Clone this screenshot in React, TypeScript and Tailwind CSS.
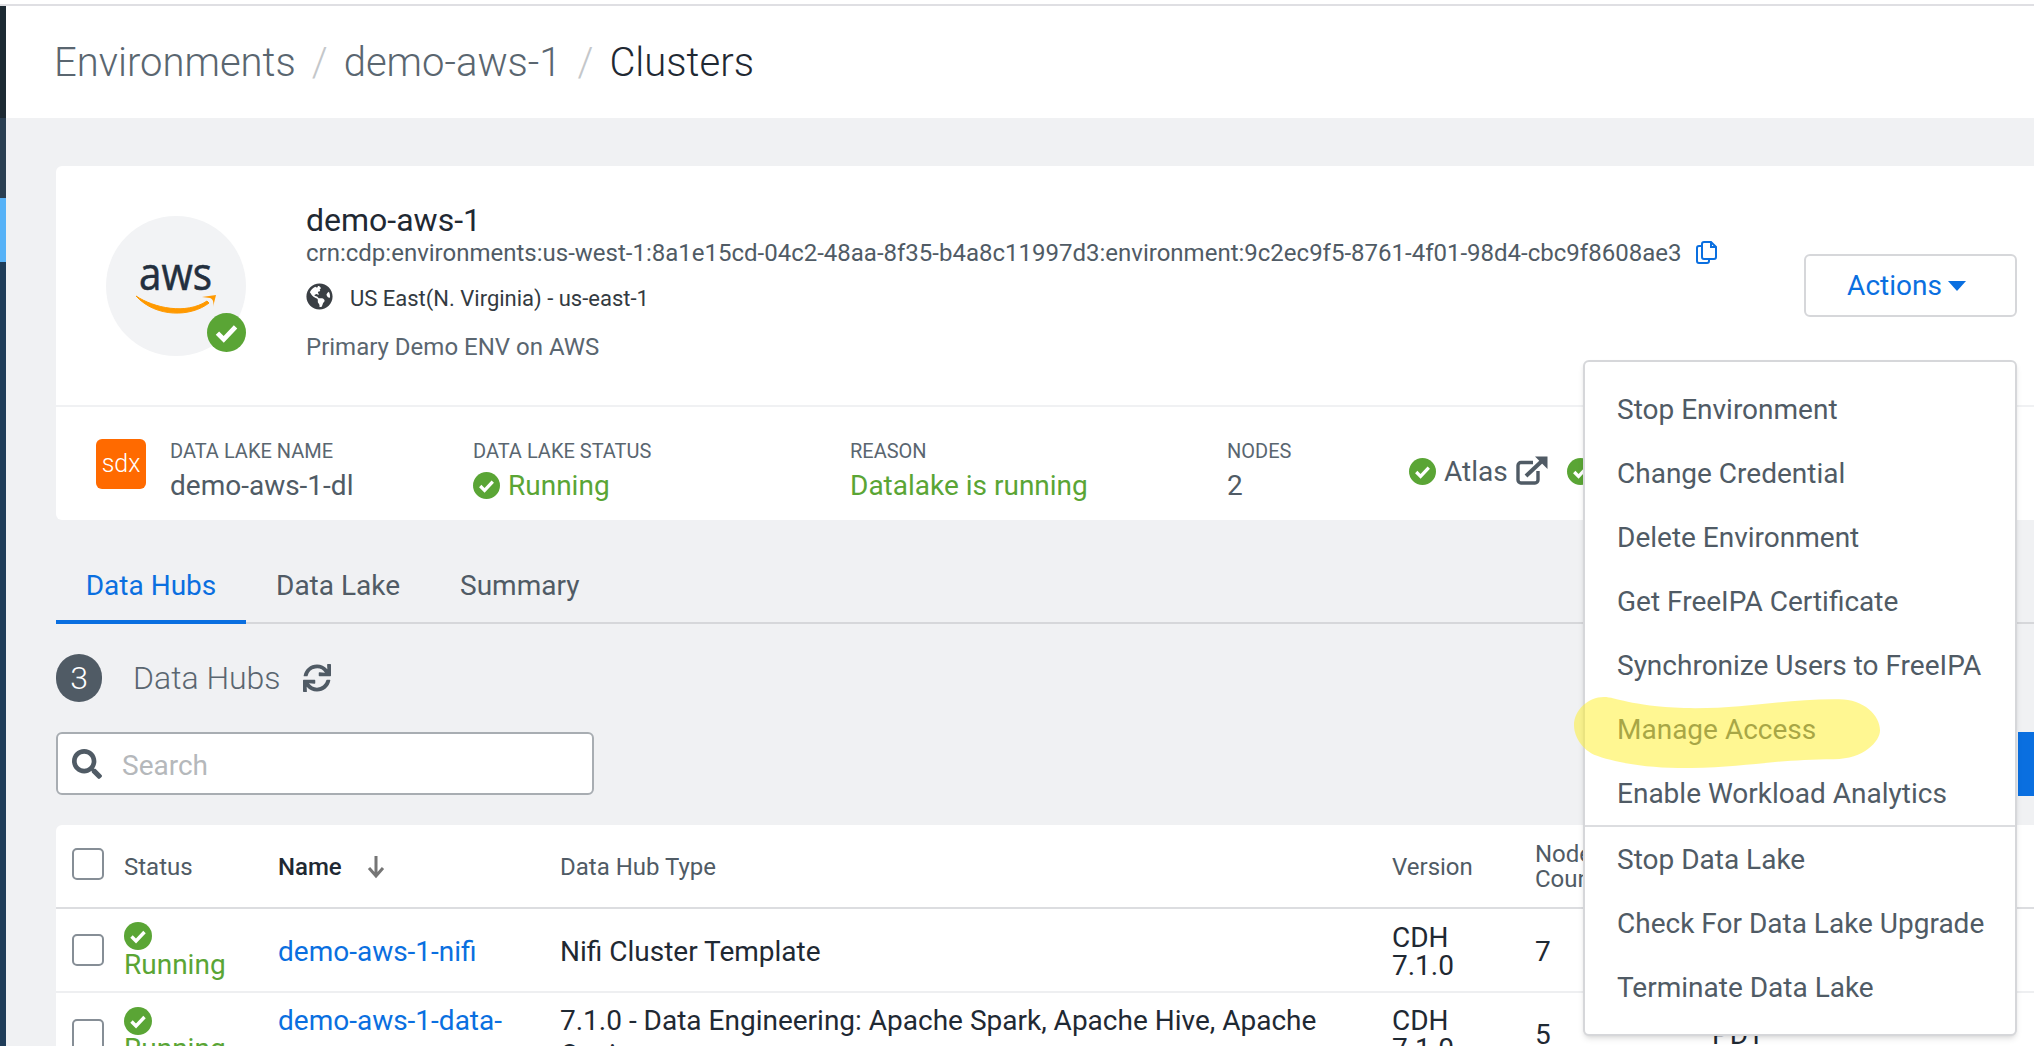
import React from "react";
import { FaGlobeAmericas, FaSync, FaSearch } from "react-icons/fa";

const ff = { fontFamily: "Roboto, sans-serif" };

function Check({ cls }: { cls: string }) {
  return (
    <svg viewBox="0 0 28 28" className={cls}>
      <circle cx="14" cy="14" r="14" fill="#5aa535" />
      <path d="M7.5 14.5l4.5 4.5 8.5-9" fill="none" stroke="#fff" strokeWidth="3.4" />
    </svg>
  );
}

function Checkbox() {
  return <div className="w-8 h-8 rounded-[5px] border-2 border-[#868e96] bg-white shrink-0" />;
}

function Stat({ label, value, w, green }: { label: string; value: React.ReactNode; w: string; green?: boolean }) {
  return (
    <div className={`${w} shrink-0`}>
      <div className="text-[20px] leading-[24px] text-[#5a6670]">{label}</div>
      <div className={`text-[28px] leading-[34px] mt-[6px] ${green ? "text-[#5aa535]" : "text-[#505b65]"}`}>{value}</div>
    </div>
  );
}

const menuA = ["Stop Environment", "Change Credential", "Delete Environment", "Get FreeIPA Certificate", "Synchronize Users to FreeIPA", "Manage Access", "Enable Workload Analytics"];
const menuB = ["Stop Data Lake", "Check For Data Lake Upgrade", "Terminate Data Lake"];

const cols = "grid grid-cols-[68px_154px_282px_832px_143px_177px_1fr]";

export default function App() {
  return (
    <div style={ff} className="relative w-[2034px] h-[1046px] overflow-hidden bg-[#f0f1f3] flex flex-col">
      <div className="h-[4px] bg-white shrink-0" />
      <div className="h-[2px] bg-[#dfdfe3] shrink-0" />
      <div className="flex flex-1 min-h-0">
        <div className="w-[6px] shrink-0 flex flex-col">
          <div className="h-[112px] bg-[#1d2a33]" />
          <div className="h-[80px] bg-[#2a3f52]" />
          <div className="h-[64px] bg-[#56b2f7]" />
          <div className="flex-1 bg-[#1f3d59]" />
        </div>
        <div className="flex-1 min-w-0">
          <div className="h-[112px] bg-white flex items-center pl-[48px] pt-[2px] text-[40px] font-light text-[#5a6670]">
            <span>Environments</span>
            <span className="mx-[16px] text-[#c4c7ca]">/</span>
            <span>demo-aws-1</span>
            <span className="mx-[16px] text-[#c4c7ca]">/</span>
            <span className="text-[#1f2933]">Clusters</span>
          </div>

          <div className="pl-[50px] pt-[48px]">
            <div className="bg-white rounded-l-[6px] h-[354px] flex flex-col">
              <div className="h-[241px] border-b-2 border-[#f0f1f3] flex shrink-0">
                <div className="relative w-[140px] h-[140px] ml-[50px] mt-[50px] rounded-full bg-[#f2f3f5] shrink-0">
                  <svg viewBox="0 0 140 140" className="w-[140px] h-[140px]">
                    <text x="33" y="74" fontFamily="Open Sans, sans-serif" fontSize="45" fill="#232f3e" stroke="#232f3e" strokeWidth="0.6" textLength="73" lengthAdjust="spacingAndGlyphs">aws</text>
                    <path d="M30 80C48 92 80 99 101 85L103 87C85 101 50 102 30 80Z" fill="#ff9900" stroke="#ff9900" strokeWidth="1" />
                    <path d="M96 81L110 79L107 91C108 86 107 83 104 82Z" fill="#ff9900" />
                  </svg>
                  <Check cls="absolute left-[101px] top-[97px] w-[39px] h-[39px]" />
                </div>
                <div className="ml-[60px] pt-[36px] min-w-0 flex-1">
                  <div className="text-[32px] leading-[36px] text-[#1f2933]">demo-aws-1</div>
                  <div className="flex items-center text-[24px] leading-[30px] text-[#505b65] whitespace-nowrap">
                    <span>crn:cdp:environments:us-west-1:8a1e15cd-04c2-48aa-8f35-b4a8c11997d3:environment:9c2ec9f5-8761-4f01-98d4-cbc9f8608ae3</span>
                    <svg viewBox="0 0 21 23" className="ml-[15px] w-[21px] h-[23px] -mt-[1px]" fill="none" stroke="#0a6fe0" strokeWidth="2">
                      <path d="M6 5H3a2 2 0 0 0-2 2V20a2 2 0 0 0 2 2H11a2 2 0 0 0 2-2V18" />
                      <path d="M8 1H15L20 6V16a2 2 0 0 1-2 2H8a2 2 0 0 1-2-2V3a2 2 0 0 1 2-2Z" />
                      <path d="M15 1V6H20" />
                    </svg>
                  </div>
                  <div className="flex items-center mt-[14px] h-[32px] text-[22px] text-[#333a41]">
                    <FaGlobeAmericas className="w-[27px] h-[27px] text-[#3a3f44] mr-[17px] -mt-[3px]" />
                    <span>US East(N. Virginia) - us-east-1</span>
                  </div>
                  <div className="mt-[18px] text-[24px] leading-[30px] text-[#5a6670]">Primary Demo ENV on AWS</div>
                </div>
              </div>
              <div className="flex-1 flex items-center pl-[40px] pt-[14px]">
                <div className="w-[50px] h-[50px] -mt-[14px] rounded-[6px] bg-[#ff6a00] text-white flex items-center justify-center text-[25px] font-light shrink-0">sdx</div>
                <div className="w-[24px] shrink-0" />
                <Stat w="w-[303px]" label="DATA LAKE NAME" value="demo-aws-1-dl" />
                <Stat
                  w="w-[377px]"
                  green
                  label="DATA LAKE STATUS"
                  value={
                    <span className="flex items-center gap-[8px]">
                      <Check cls="w-[27px] h-[27px]" />
                      Running
                    </span>
                  }
                />
                <Stat w="w-[377px]" green label="REASON" value="Datalake is running" />
                <Stat w="w-[182px]" label="NODES" value="2" />
                <div className="flex items-center text-[28px] text-[#505b65] mt-[2px]">
                  <Check cls="w-[27px] h-[27px] mr-[8px]" />
                  <span>Atlas</span>
                  <svg viewBox="0 0 32 29" className="ml-[8px] w-[32px] h-[29px] -mt-[2px]" fill="none" stroke="#505b65">
                    <path d="M17 6.5H5a3 3 0 0 0-3 3V24a3 3 0 0 0 3 3H19a3 3 0 0 0 3-3V15" strokeWidth="3.4" />
                    <path d="M10 20L26 5" strokeWidth="4" />
                    <path d="M19 0.5H31.5V13Z" fill="#505b65" stroke="none" />
                  </svg>
                  <Check cls="w-[27px] h-[27px] ml-[19px]" />
                </div>
              </div>
            </div>

            <div className="mt-[38px] h-[66px] border-b-2 border-[#d6d7da] flex text-[28px] text-[#505b65]">
              <div className="w-[190px] h-[66px] text-center leading-[56px] text-[#0a6fe0] border-b-[4px] border-[#0a6fe0]">Data Hubs</div>
              <div className="ml-[30px] leading-[56px]">Data Lake</div>
              <div className="ml-[60px] leading-[56px]">Summary</div>
            </div>

            <div className="mt-[30px] flex items-center h-[48px]">
              <div className="w-[46px] h-[48px] rounded-full bg-[#505b65] text-white flex items-center justify-center text-[32px] font-light">3</div>
              <span className="ml-[31px] text-[32px] font-light text-[#5a6670]">Data Hubs</span>
              <FaSync className="ml-[22px] w-[28px] h-[28px] text-[#505b65]" />
            </div>

            <div className="mt-[30px] w-[538px] h-[63px] rounded-[6px] border-2 border-[#a8adb2] bg-white flex items-center pl-[14px]">
              <FaSearch className="w-[30px] h-[30px] text-[#505b65]" />
              <span className="ml-[20px] mt-[4px] text-[28px] text-[#b5b8bb]">Search</span>
            </div>

            <div className="mt-[30px] bg-white rounded-tl-[6px]">
              <div className={`${cols} h-[84px] pt-[2px] items-center border-b-2 border-[#dcdde0] text-[24px] text-[#505b65]`}>
                <div className="pl-[16px] -mt-[6px]"><Checkbox /></div>
                <div>Status</div>
                <div className="flex items-center font-medium text-[#1f2933]">
                  Name
                  <svg viewBox="0 0 20 24" className="w-[20px] h-[24px] ml-[24px]"><path d="M10 1v20M3 13l7 8 7-8" fill="none" stroke="#757575" strokeWidth="3" /></svg>
                </div>
                <div>Data Hub Type</div>
                <div>Version</div>
                <div className="leading-[25px]">Node<br />Count</div>
                <div />
              </div>
              <div className={`${cols} h-[84px] pt-[3px] items-center border-b-2 border-[#eeeff1] text-[28px] text-[#1f2933]`}>
                <div className="pl-[16px] -mt-[3px]"><Checkbox /></div>
                <div className="leading-[30px] -mt-[1px] text-[#5aa535]">
                  <Check cls="w-[28px] h-[28px]" />
                  <div>Running</div>
                </div>
                <div className="text-[#0a6fe0]">demo-aws-1-nifi</div>
                <div>Nifi Cluster Template</div>
                <div className="leading-[28px]">CDH<br />7.1.0</div>
                <div>7</div>
                <div />
              </div>
              <div className={`${cols} h-[84px] items-center text-[28px] text-[#1f2933]`}>
                <div className="pl-[16px]"><Checkbox /></div>
                <div className="leading-[28px] text-[#5aa535]">
                  <Check cls="w-[28px] h-[28px]" />
                  <div>Running</div>
                </div>
                <div className="text-[#0a6fe0] leading-[34px] pr-[40px] pt-[5px]">demo-aws-1-data-eng</div>
                <div className="leading-[34px] pr-[40px] pt-[5px]">7.1.0 - Data Engineering: Apache Spark, Apache Hive, Apache Oozie</div>
                <div className="leading-[28px]">CDH<br />7.1.0</div>
                <div>5</div>
                <div>PDT</div>
              </div>
            </div>
          </div>
        </div>
      </div>

      <div className="absolute left-[1804px] top-[254px] w-[213px] h-[63px] rounded-[6px] border-2 border-[#d6d7da] bg-white flex items-center justify-center pr-[8px] text-[28px] text-[#0a6fe0]">
        <span className="mt-[1px]">Actions</span>
        <svg viewBox="0 0 18 10" className="w-[18px] h-[10px] ml-[6px]"><path d="M0 0h18L9 10z" fill="#0a6fe0" /></svg>
      </div>

      <div className="absolute left-[2018px] top-[732px] w-[16px] h-[64px] bg-[#0a6fe0]" />

      <div className="absolute left-[1583px] top-[360px] w-[434px] h-[676px] rounded-[6px] border-2 border-[#d6d7da] bg-white shadow-md pt-[16px] text-[28px] text-[#505b65]">
        {menuA.map((m) => (
          <div key={m} className="h-[64px] leading-[64px] pl-[32px] whitespace-nowrap">{m}</div>
        ))}
        <div className="h-[2px] bg-[#dcdde0] -mt-[1px] mb-[1px]" />
        {menuB.map((m) => (
          <div key={m} className="h-[64px] leading-[64px] pl-[32px] whitespace-nowrap">{m}</div>
        ))}
      </div>

      <svg viewBox="0 0 306 71" className="absolute left-[1574px] top-[697px] w-[306px] h-[71px] opacity-50">
        <path d="M30 0C42 0 55 12 110 15C170 17 210 2 265 3C290 3 306 25 306 45C306 60 290 84 260 84C200 84 170 96 110 96C70 96 40 88 20 78C5 68 0 50 0 38C0 18 14 0 30 0Z" transform="scale(1 0.74)" fill="#fff028" />
      </svg>
    </div>
  );
}
